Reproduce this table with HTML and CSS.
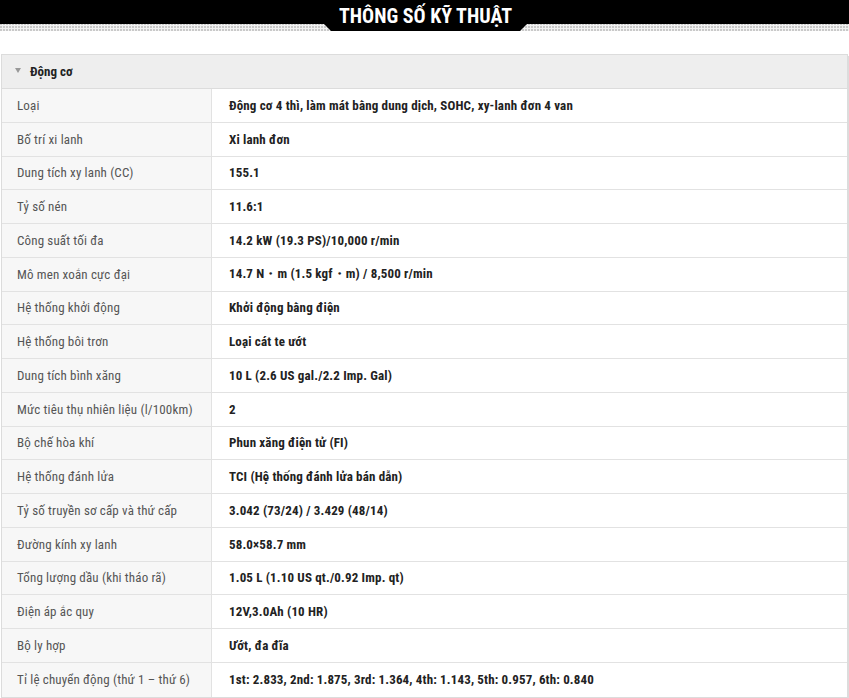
FILE: index.html
```html
<!DOCTYPE html>
<html lang="vi">
<head>
<meta charset="utf-8">
<title>Thông số kỹ thuật</title>
<link rel="stylesheet" href="styles.css">
</head>
<body>
<div class="banner">
  <div class="banner-bar"></div>
  <div class="banner-stripe"></div>
  <div class="banner-tab"><h1>THÔNG SỐ KỸ THUẬT</h1></div>
</div>
<section class="spec">
  <div class="spec-head"><span class="tri"></span>Động cơ</div>
  <div class="spec-grid">
    <div class="k">Loại</div><div class="v">Động cơ 4 thì, làm mát bằng dung dịch, SOHC, xy-lanh đơn 4 van</div>
    <div class="k">Bố trí xi lanh</div><div class="v">Xi lanh đơn</div>
    <div class="k">Dung tích xy lanh (CC)</div><div class="v">155.1</div>
    <div class="k">Tỷ số nén</div><div class="v">11.6:1</div>
    <div class="k">Công suất tối đa</div><div class="v">14.2 kW (19.3 PS)/10,000 r/min</div>
    <div class="k">Mô men xoắn cực đại</div><div class="v">14.7 N・m (1.5 kgf・m) / 8,500 r/min</div>
    <div class="k">Hệ thống khởi động</div><div class="v">Khởi động bằng điện</div>
    <div class="k">Hệ thống bôi trơn</div><div class="v">Loại cát te ướt</div>
    <div class="k">Dung tích bình xăng</div><div class="v">10 L (2.6 US gal./2.2 Imp. Gal)</div>
    <div class="k">Mức tiêu thụ nhiên liệu (l/100km)</div><div class="v">2</div>
    <div class="k">Bộ chế hòa khí</div><div class="v">Phun xăng điện tử (FI)</div>
    <div class="k">Hệ thống đánh lửa</div><div class="v">TCI (Hệ thống đánh lửa bán dẫn)</div>
    <div class="k">Tỷ số truyền sơ cấp và thứ cấp</div><div class="v">3.042 (73/24) / 3.429 (48/14)</div>
    <div class="k">Đường kính xy lanh</div><div class="v">58.0×58.7 mm</div>
    <div class="k">Tổng lượng dầu (khi tháo rã)</div><div class="v">1.05 L (1.10 US qt./0.92 Imp. qt)</div>
    <div class="k">Điện áp ắc quy</div><div class="v">12V,3.0Ah (10 HR)</div>
    <div class="k">Bộ ly hợp</div><div class="v">Ướt, đa đĩa</div>
    <div class="k">Tỉ lệ chuyển động (thứ 1 – thứ 6)</div><div class="v">1st: 2.833, 2nd: 1.875, 3rd: 1.364, 4th: 1.143, 5th: 0.957, 6th: 0.840</div>
  </div>
</section>
</body>
</html>
```
FILE: styles.css
```css
* { box-sizing: border-box; }
html, body { margin: 0; padding: 0; background: #fff; }
body {
  font-family: "Roboto Condensed", Roboto, "Liberation Sans", sans-serif;
  font-stretch: condensed;
  color: #222;
}
.banner {
  position: relative;
  height: 32px;
}
.banner-bar {
  height: 24px;
  background: #000;
}
.banner-stripe {
  height: 7px;
  background-color: #c9c9c9;
  background-image:
    repeating-linear-gradient(90deg, transparent 0 2px, #f2f2f2 2px 3px),
    repeating-linear-gradient(0deg, transparent 0 2px, #f2f2f2 2px 3px);
}
.banner-tab {
  position: absolute;
  left: 324px;
  top: 0;
  width: 203px;
  height: 31px;
  background: #000;
  clip-path: polygon(0 0, 100% 0, 100% 24px, calc(100% - 7px) 100%, 7px 100%, 0 24px);
  display: flex;
  justify-content: center;
}
.banner-tab h1 {
  margin: 4px 0 0;
  font-size: 20px;
  line-height: 24px;
  font-weight: 700;
  color: #fff;
  letter-spacing: 0;
}
.spec {
  margin: 22px 1px 0 1px;
  border: 1px solid #dcdcdc;
  box-shadow: 1px 2px 0 #dcdcdc;
  font-size: 13px;
}
.spec-head {
  height: 34px;
  background: #eee;
  border-bottom: 1px solid #dcdcdc;
  display: flex;
  align-items: center;
  padding-left: 13px;
  font-weight: 700;
  font-size: 13px;
  color: #222;
}
.tri {
  width: 0; height: 0;
  border-left: 3.5px solid transparent;
  border-right: 3.5px solid transparent;
  border-top: 5px solid #999;
  margin-right: 9px;
  margin-top: -2px;
}
.spec-grid {
  display: grid;
  grid-template-columns: 210px 1fr;
}
.k, .v {
  height: 33.75px;
  display: flex;
  align-items: center;
  border-bottom: 1px solid #e2e2e2;
}
.k {
  background: #f7f7f7;
  color: #555;
  font-size: 13px;
  letter-spacing: 0.15px;
  padding-left: 15px;
  border-right: 1px solid #e2e2e2;
}
.v {
  background: #fff;
  padding-left: 17px;
  font-weight: 700;
  font-size: 13px;
  letter-spacing: 0.15px;
  color: #222;
}
.k:nth-last-child(2), .v:last-child { border-bottom: none; }
```
